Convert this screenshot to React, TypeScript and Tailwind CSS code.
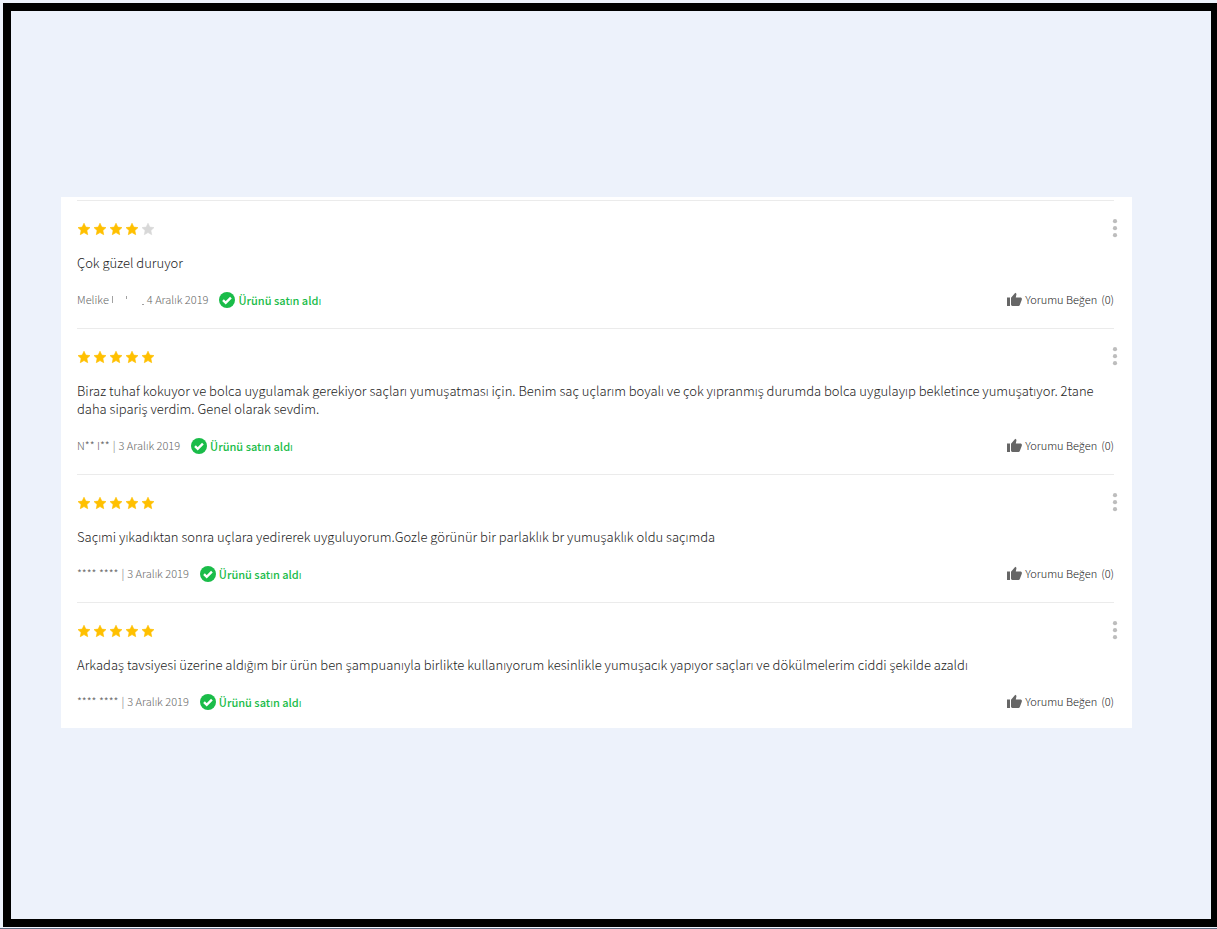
import React from "react";

type Review = {
  id: number;
  stars: number;
  text: string;
  author: string;
  masked?: boolean;
  date: string;
  likes: number;
};

const reviews: Review[] = [
  {
    id: 1,
    stars: 4,
    text: "Çok güzel duruyor",
    author: "Melike",
    masked: true,
    date: "4 Aralık 2019",
    likes: 0,
  },
  {
    id: 2,
    stars: 5,
    text: "Biraz tuhaf kokuyor ve bolca uygulamak gerekiyor saçları yumuşatması için. Benim saç uçlarım boyalı ve çok yıpranmış durumda bolca uygulayıp bekletince yumuşatıyor. 2tane daha sipariş verdim. Genel olarak sevdim.",
    author: "N** I**",
    date: "3 Aralık 2019",
    likes: 0,
  },
  {
    id: 3,
    stars: 5,
    text: "Saçımi yıkadıktan sonra uçlara yedirerek uyguluyorum.Gozle görünür bir parlaklık br yumuşaklık oldu saçımda",
    author: "**** ****",
    date: "3 Aralık 2019",
    likes: 0,
  },
  {
    id: 4,
    stars: 5,
    text: "Arkadaş tavsiyesi üzerine aldığım bir ürün ben şampuanıyla birlikte kullanıyorum kesinlikle yumuşacık yapıyor saçları ve dökülmelerim ciddi şekilde azaldı",
    author: "**** ****",
    date: "3 Aralık 2019",
    likes: 0,
  },
];

function Star({ filled }: { filled: boolean }) {
  return (
    <svg
      viewBox="0 0 16 16"
      className={filled ? "size-4 text-[#ffc000]" : "size-4 text-[#d8d8d8]"}
      fill="currentColor"
    >
      <path
        d="M7 2.200l1.800 3.900 4.200.5-3.100 2.900.8 4.200L7 11.600l-3.700 2.100.8-4.200L1 6.600l4.200-.5z"
        stroke="currentColor"
        strokeWidth=".6"
        strokeLinejoin="round"
      />
    </svg>
  );
}

function ReviewItem({ review }: { review: Review }) {
  return (
    <li className="border-t border-[#ebebeb] pt-5 pb-[21px] last:pb-[19px]">
      <div className="flex h-4 items-center justify-between">
        <div className="flex" role="img" aria-label={`${review.stars} / 5`}>
          {[1, 2, 3, 4, 5].map((n) => (
            <Star key={n} filled={n <= review.stars} />
          ))}
        </div>
        <button type="button" aria-label="Menü" className="-mr-1 cursor-pointer text-[#bdbdbd]">
          <svg viewBox="0 0 6 20" className="h-5 w-[6px]" fill="currentColor">
            <circle cx="3" cy="2.200" r="2.100" />
            <circle cx="3" cy="9.200" r="2.100" />
            <circle cx="3" cy="16.200" r="2.100" />
          </svg>
        </button>
      </div>
      <p className="mt-[17px] text-[13px] leading-[18px] font-light text-[#222222]">{review.text}</p>
      <div className="mt-[19px] flex h-4 items-start justify-between text-[11px] leading-4 font-light">
        <div className="flex items-start">
          <span className="flex items-center text-[#666666]">
            {review.author}
            {review.masked ? (
              <svg viewBox="0 0 38 16" className="h-4 w-[38px]" fill="currentColor" opacity=".6">
                <rect x="3" y="5" width="1" height="7" />
                <rect x="17" y="5" width="1" height="3" />
                <rect x="33" y="13" width="2" height="1" />
              </svg>
            ) : (
              <span className="mx-[3px]">|</span>
            )}
            {review.date}
          </span>
          <span className="mt-px ml-[11px] flex items-center gap-[3px] font-medium text-[#1abc49]">
            <svg viewBox="0 0 16 16" className="size-4">
              <circle cx="8" cy="8" r="8" fill="#1abc49" />
              <path d="M4 8.200l2.700 2.600 5.200-5.200" fill="none" stroke="#fff" strokeWidth="2.400" />
            </svg>
            Ürünü satın aldı
          </span>
        </div>
        <button type="button" className="flex cursor-pointer items-center text-[#222222]">
          <svg viewBox="0 0 16 16" className="size-4 text-[#666666]" fill="currentColor">
            <path d="M1 6.500h3V15H1zM5 6.700L9.300 1.800l.9.800c.2.2.3.5.2.8L9.800 6.500h4.600c.9 0 1.600.7 1.500 1.600l-.1.6-2 5.300c-.2.600-.7 1-1.300 1H6.400C5.600 15 5 14.400 5 13.600z" />
          </svg>
          <span className="ml-[3px]">Yorumu Beğen</span>
          <span className="ml-1">({review.likes})</span>
        </button>
      </div>
    </li>
  );
}

export default function App() {
  return (
    <div className="min-h-screen overflow-hidden border-b border-[#5f6f86] bg-[#edf2fb] pt-[3px] pl-[3px] font-['Noto_Sans_CJK_SC','Open_Sans',sans-serif]">
      <main className="flex min-h-[calc(100vh-5px)] flex-col justify-center border-8 border-r-[6px] border-black pr-[79px] pb-[5px] pl-[50px]">
        <ul className="bg-white pt-[3px] pr-[18px] pl-4">
          {reviews.map((review) => (
            <ReviewItem key={review.id} review={review} />
          ))}
        </ul>
      </main>
    </div>
  );
}
